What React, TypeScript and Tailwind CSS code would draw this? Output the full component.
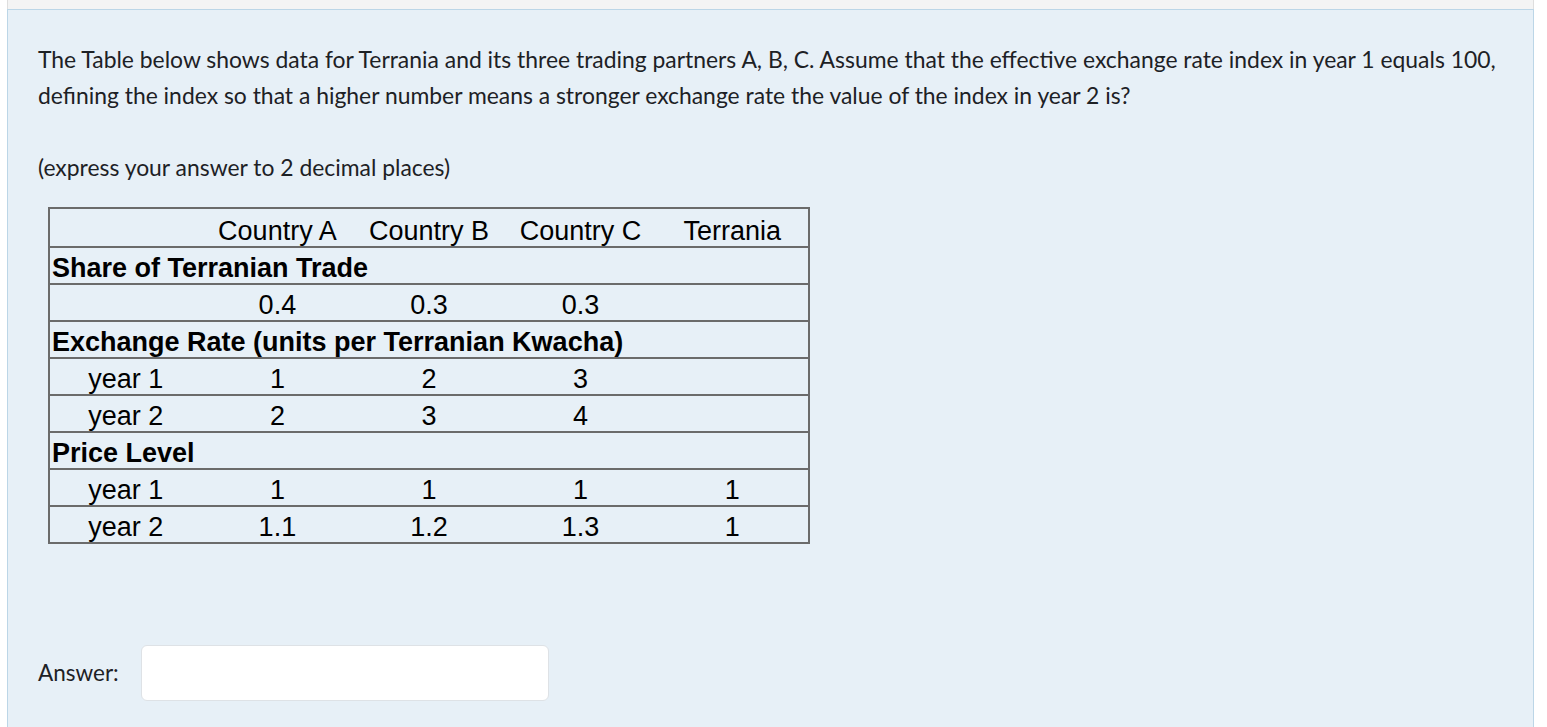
import React from 'react';

const rows: { label: string; bold?: boolean; cells?: string[] }[] = [
  { label: 'Share of Terranian Trade', bold: true },
  { label: '', cells: ['0.4', '0.3', '0.3', ''] },
  { label: 'Exchange Rate (units per Terranian Kwacha)', bold: true },
  { label: 'year 1', cells: ['1', '2', '3', ''] },
  { label: 'year 2', cells: ['2', '3', '4', ''] },
  { label: 'Price Level', bold: true },
  { label: 'year 1', cells: ['1', '1', '1', '1'] },
  { label: 'year 2', cells: ['1.1', '1.2', '1.3', '1'] },
];

const DataTable = () => {
  return (
    <div
      className="ml-[10px] w-[762px] border-2 border-[#6b6b6b] text-[27px] text-black"
      style={{ fontFamily: '"Liberation Sans", Arial, sans-serif' }}
    >
      {/* header */}
      <div className="grid grid-cols-5 h-[37px] leading-[36px] pt-[4px]">
        <div />
        <div className="text-center">Country A</div>
        <div className="text-center">Country B</div>
        <div className="text-center">Country C</div>
        <div className="text-center">Terrania</div>
      </div>
      {rows.map((r, i) =>
        r.bold ? (
          <div key={i} className="h-[37px] leading-[34px] pt-[3px] border-t-2 border-[#6b6b6b] pl-[2px] font-bold whitespace-nowrap">
            {r.label}
          </div>
        ) : (
          <div key={i} className="grid grid-cols-5 h-[37px] leading-[34px] pt-[3px] border-t-2 border-[#6b6b6b]">
            <div className="text-center">{r.label}</div>
            {r.cells!.map((c, j) => (
              <div key={j} className="text-center">
                {c}
              </div>
            ))}
          </div>
        )
      )}
    </div>
  );
};

export default function App() {
  return (
    <div className="min-h-screen bg-white pl-[7px] pr-[13px]" style={{ fontFamily: 'Lato, "Open Sans", sans-serif' }}>
      <div className="h-[9px] bg-[#f4f4f4] border-x border-[#dedede]" />
      <div className="min-h-[740px] bg-[#e7f0f7] border border-[#bcd6e7] px-[30px] pt-[31px] text-[22.9px] leading-[36px] text-[#1d2125]">
        <p className="whitespace-nowrap">
          The Table below shows data for Terrania and its three trading partners A, B, C. Assume that the effective exchange rate index in year 1 equals 100,
          <br />
          defining the index so that a higher number means a stronger exchange rate the value of the index in year 2 is?
        </p>
        <p className="mt-[36px]">(express your answer to 2 decimal places)</p>
        <div className="mt-[22px]">
          <DataTable />
        </div>
        <div className="mt-[101px] flex items-center gap-[22px]">
          <span className="text-[22.5px]">Answer:</span>
          <input
            type="text"
            className="w-[408px] h-[56px] bg-white border border-[#dee2e6] rounded-[6px] outline-none px-3"
          />
        </div>
      </div>
    </div>
  );
}
